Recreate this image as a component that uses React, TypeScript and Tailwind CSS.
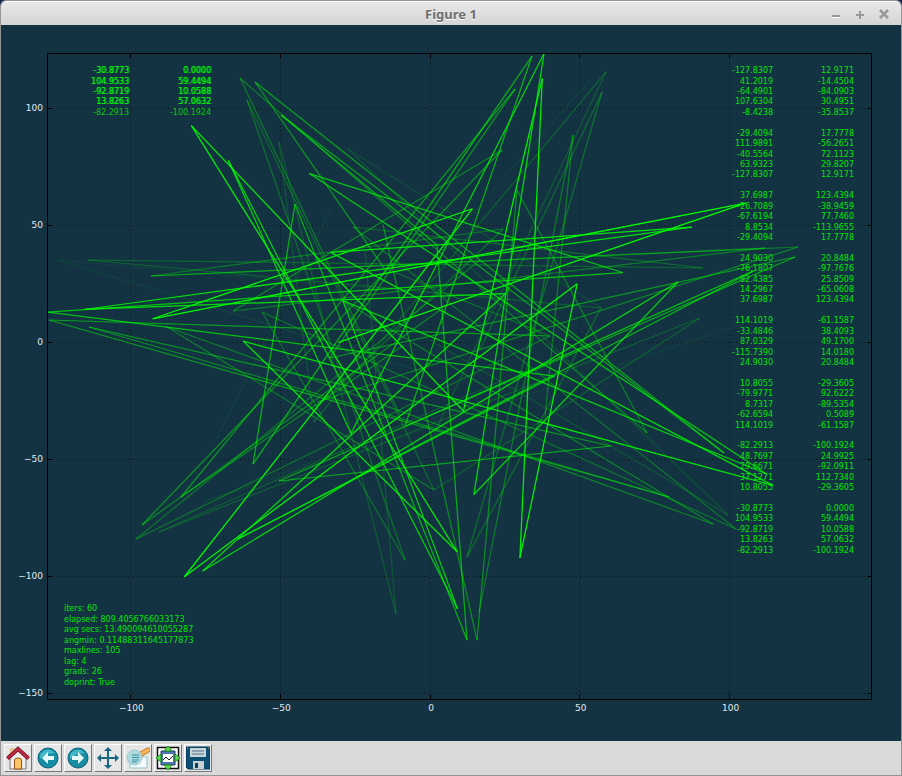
import type { ReactNode } from "react";

type Point = [number, number];
type Segment = [number, number, number, number, number];

const groups: Point[][] = [
  [[-127.8307, 12.9171], [41.2019, -14.4504], [-64.4901, -84.0903], [107.6304, 30.4951], [-8.4238, -35.8537]],
  [[-29.4094, 17.7778], [111.9891, -56.2651], [-40.5564, 72.1123], [63.9323, 29.8207], [-127.8307, 12.9171]],
  [[37.6987, 123.4394], [-26.7089, -38.9459], [-67.6194, 77.746], [8.8534, -113.9655], [-29.4094, 17.7778]],
  [[24.903, 20.8484], [-76.1807, -97.7676], [82.4385, 25.8509], [14.2967, -65.0608], [37.6987, 123.4394]],
  [[114.1019, -61.1587], [-33.4846, 38.4093], [87.0329, 49.17], [-115.739, 14.018], [24.903, 20.8484]],
  [[10.8055, -29.3605], [-79.9771, 92.6222], [8.7317, -89.5354], [-62.6594, 0.5089], [114.1019, -61.1587]],
  [[-82.2913, -100.1924], [48.7697, 24.9925], [29.6671, -92.0911], [37.1271, 112.734], [10.8055, -29.3605]],
  [[-30.8773, 0], [104.9533, 59.4494], [-92.8719, 10.0588], [13.8263, 57.0632], [-82.2913, -100.1924]],
];

const info = [
  "iters: 60",
  "elapsed: 809.4056766033173",
  "avg secs: 13.490094610055287",
  "angmin: 0.11488311645177873",
  "maxlines: 105",
  "lag: 4",
  "grads: 26",
  "doprint: True",
];

const sx = (x: number) => 431 + x * 2.997;
const sy = (y: number) => 342.3 - y * 2.34;

// Newest point first; the last point of a group is the first of the one before it.
const trail: Point[] = [...groups]
  .reverse()
  .flatMap((g, i) => (i === 0 ? g : g.slice(1)));

// Older segments, in plot coordinates, each with its remaining opacity.
const older: Segment[] = [
  [405, 426, 532, 56, 0.62], [532, 56, 253, 464, 0.62], [253, 464, 295, 204, 0.62],
  [295, 204, 467, 640, 0.6], [467, 640, 437, 245, 0.6], [437, 245, 281, 115, 0.58],
  [281, 115, 724, 453, 0.56], [724, 453, 255, 82, 0.54], [255, 82, 384, 268, 0.5],
  [384, 268, 550, 336, 0.3], [550, 336, 49, 320, 0.52], [49, 320, 669, 497, 0.5],
  [669, 497, 89, 327, 0.42], [89, 327, 611, 446, 0.5], [611, 446, 279, 481, 0.58],
  [279, 481, 795, 257, 0.56], [795, 257, 330, 358, 0.5], [330, 358, 515, 89, 0.5],
  [515, 89, 181, 497, 0.5], [181, 497, 404, 345, 0.4], [233, 311, 502, 150, 0.42],
  [502, 150, 142, 525, 0.46], [142, 525, 440, 310, 0.42], [233, 311, 765, 248, 0.36],
  [765, 248, 151, 276, 0.34], [317, 402, 798, 247, 0.42], [798, 247, 151, 276, 0.36],
  [151, 276, 503, 229, 0.34], [503, 229, 314, 410, 0.3], [167, 327, 713, 524, 0.38],
  [167, 327, 434, 490, 0.36], [713, 524, 342, 300, 0.38], [240, 78, 647, 433, 0.38],
  [647, 433, 517, 190, 0.38], [517, 190, 477, 640, 0.44], [477, 640, 383, 225, 0.44],
  [240, 78, 400, 415, 0.34], [479, 612, 573, 135, 0.36], [573, 135, 545, 417, 0.36],
  [136, 539, 480, 260, 0.32], [136, 539, 550, 336, 0.34], [736, 529, 353, 227, 0.32],
  [736, 529, 262, 312, 0.32], [262, 312, 405, 560, 0.3], [405, 560, 247, 100, 0.3],
  [247, 100, 434, 490, 0.28], [353, 227, 703, 268, 0.28], [703, 268, 88, 260, 0.26],
  [88, 260, 601, 308, 0.24], [601, 308, 467, 557, 0.28], [467, 557, 602, 92, 0.3],
  [602, 92, 480, 350, 0.28], [606, 72, 314, 422, 0.22], [606, 72, 434, 434, 0.2],
  [396, 614, 279, 142, 0.2], [396, 614, 365, 250, 0.18], [279, 142, 314, 422, 0.16],
  [348, 149, 601, 308, 0.12], [348, 149, 728, 515, 0.15], [728, 515, 430, 340, 0.16],
  [159, 532, 700, 318, 0.22], [159, 532, 503, 380, 0.2], [700, 318, 434, 490, 0.22],
  [740, 325, 203, 502, 0.08], [203, 502, 590, 360, 0.07], [216, 440, 330, 210, 0.07],
  [590, 80, 353, 350, 0.07], [58, 260, 450, 380, 0.09], [58, 260, 500, 300, 0.07],
];

const xTicks = [-100, -50, 0, 50, 100];
const yTicks = [100, 50, 0, -50, -100, -150];
const tickLabel = (n: number) => (n < 0 ? `−${-n}` : `${n}`);

function Plot() {
  return (
    <svg
      viewBox="1 25 900 716"
      className="block h-auto w-full"
      role="img"
      aria-label="Line plot of the search trail"
    >
      <g stroke="#000" strokeOpacity="0.6" strokeDasharray="1 3">
        {xTicks.map((t) => {
          const x = Math.floor(sx(t)) - 0.5;
          return <line key={t} x1={x} x2={x} y1="699" y2="54" />;
        })}
        {yTicks.map((t) => {
          const y = Math.floor(sy(t)) + 0.5;
          return <line key={t} x1="48" x2="871" y1={y} y2={y} />;
        })}
      </g>
      <g fill="none" stroke="#00ff00" strokeWidth="1.25">
        {[...older].reverse().map(([x1, y1, x2, y2, o], i) => (
          <line key={i} x1={x1} y1={y1} x2={x2} y2={y2} strokeOpacity={o} />
        ))}
        {trail.slice(1).map((p, i) => (
          <line
            key={i}
            x1={sx(trail[i][0])}
            y1={sy(trail[i][1])}
            x2={Math.max(48, sx(p[0]))}
            y2={Math.max(54, sy(p[1]))}
            strokeOpacity={1 - i * 0.011}
          />
        ))}
      </g>
      <g stroke="#000">
        {xTicks.map((t) => {
          const x = Math.floor(sx(t)) - 0.5;
          return <path key={t} d={`M${x} 699v-4M${x} 54v4`} />;
        })}
        {yTicks.map((t) => {
          const y = Math.floor(sy(t)) + 0.5;
          return <path key={t} d={`M48 ${y}h4M871 ${y}h-4`} />;
        })}
        <rect x="47.5" y="53.5" width="824" height="646" fill="none" />
      </g>
      <g className="fill-[#e4e9eb] text-[9px]">
        {xTicks.map((t) => (
          <text key={t} x={sx(t)} y="711" textAnchor="middle">
            {tickLabel(t)}
          </text>
        ))}
        {yTicks.map((t) => (
          <text key={t} x="43" y={Math.round(sy(t)) + 3} textAnchor="end">
            {tickLabel(t)}
          </text>
        ))}
      </g>
    </svg>
  );
}

function Row({ point }: { point: Point }) {
  return (
    <tr>
      <td className="w-10 p-0 align-middle">{point[0].toFixed(4)}</td>
      <td className="p-0 align-middle">{point[1].toFixed(4)}</td>
    </tr>
  );
}

function History() {
  return (
    <table
      aria-label="Point history"
      className="absolute top-[41px] right-[47px] h-[490px] w-[122px] border-collapse text-right text-[8px] leading-[8px] text-[#02e406]"
    >
      <tbody>
        {groups.flatMap((g, i) => [
          ...g.map((p, j) => <Row key={`${i}-${j}`} point={p} />),
          ...(i < groups.length - 1
            ? [
                <tr key={`gap-${i}`}>
                  <td className="p-0" colSpan={2}>
                    &nbsp;
                  </td>
                </tr>,
              ]
            : []),
        ])}
      </tbody>
    </table>
  );
}

function Latest() {
  return (
    <table
      aria-label="Latest points"
      className="absolute top-[41px] left-[88px] h-[52px] w-[122px] border-collapse text-right text-[8px] leading-[8px] text-[#00f804] [&_tr:last-child]:text-[#02c80a] [&_tr:not(:last-child)]:[text-shadow:1px_0_#00f80499]"
    >
      <tbody>
        {groups[7].map((p, i) => (
          <Row key={i} point={p} />
        ))}
      </tbody>
    </table>
  );
}

function Tool({ label, children }: { label: string; children: ReactNode }) {
  return (
    <button
      type="button"
      aria-label={label}
      className="flex size-7 items-center justify-center border border-t-white border-r-[#777] border-b-[#777] border-l-white bg-[#e6e6e6]"
    >
      <svg viewBox="0 0 24 24" className="size-6 shrink-0" fill="none">
        {children}
      </svg>
    </button>
  );
}

function Toolbar() {
  return (
    <div role="toolbar" aria-label="Figure tools" className="flex gap-0.5 bg-[#d9d9d9] p-[3px]">
      <Tool label="Home">
        <path d="M5 3h3v8H5z" fill="#fff3d0" stroke="#d69a2d" />
        <path d="M4 12l8-8 8 8v11H4z" fill="#eee" stroke="#777" />
        <path d="M1.500 12.500L12 3l10.500 9.500" stroke="#701023" strokeWidth="4" />
        <path d="M1.500 12.500L12 3l10.500 9.500" stroke="#b92942" strokeWidth="2.500" />
        <path d="M8.500 23V14q0-2 3.500-2t3.500 2v9z" fill="#ffc568" stroke="#96520d" />
      </Tool>
      <Tool label="Back">
        <circle cx="12" cy="12" r="10" fill="#168da3" stroke="#086078" />
        <path d="M4 9a9 9 0 0 1 15-2Q10 7 4 13z" fill="#46b9c8" />
        <path d="M6 12l6-6v4h6v4h-6v4z" fill="#e8f7f8" />
      </Tool>
      <Tool label="Forward">
        <circle cx="12" cy="12" r="10" fill="#168da3" stroke="#086078" />
        <path d="M4 9a9 9 0 0 1 15-2Q10 7 4 13z" fill="#46b9c8" />
        <path d="M18 12l-6-6v4H6v4h6v4z" fill="#e8f7f8" />
      </Tool>
      <Tool label="Pan">
        <path d="M12 3v18M3 12h18" stroke="#176783" strokeWidth="2" />
        <path d="M12 1l4 4H8zM12 23l-4-4h8zM1 12l4-4v8zM23 12l-4 4V8z" fill="#176783" />
      </Tool>
      <Tool label="Zoom">
        <path d="M4 11h17v11H4z" fill="#f4fafa" stroke="#91c6ce" />
        <path d="M15 8l7-4" stroke="#bc7420" strokeWidth="5" strokeLinecap="round" />
        <path d="M15 8l7-4" stroke="#f8b45b" strokeWidth="3.500" strokeLinecap="round" />
        <circle cx="8.500" cy="11.500" r="7.500" fill="#a9d8dd" fillOpacity="0.9" stroke="#9cc9d0" />
        <path d="M6 9h7M6 11.500h7M6 14h7M6 16h5" stroke="#378da0" />
      </Tool>
      <Tool label="Configure subplots">
        <path d="M1.500 1.500h21v21h-21z" fill="#fff" stroke="#111" strokeWidth="1.500" />
        <path d="M5 5h14v14H5z" fill="#4f75b2" stroke="#25406f" />
        <path d="M7 8h10v8H7z" fill="#fff" />
        <path d="M7 14l3-3 3 3 4-4" stroke="#222" />
        <path d="M12 0l4 5H8zM12 24l-4-5h8zM0 12l5-4v8zM24 12l-5 4V8z" fill="#5be04b" stroke="#258a20" />
      </Tool>
      <Tool label="Save">
        <path d="M0 1h24v22H2l-2-2z" fill="#0d4f72" stroke="#063855" />
        <path d="M4 2h16v9H4z" fill="#c5d5da" />
        <path d="M6 5h12M6 8h12" stroke="#557783" />
        <path d="M1 2h1M22 2h1" stroke="#ed9b56" />
        <path d="M7 15h11v8H7z" fill="#c8d0d3" />
        <path d="M9 17h3v5H9z" fill="#123f59" />
      </Tool>
    </div>
  );
}

export default function App() {
  return (
    <div className="flex min-h-screen flex-col bg-[#1b2455] font-['DejaVu_Sans',sans-serif]">
      <main className="flex flex-1 flex-col overflow-hidden rounded-t-md border border-b-2 border-[#959595] bg-[#133343]">
        <header className="grid h-6 grid-cols-[1fr_auto_1fr] items-center border-t border-white bg-linear-to-b from-[#e8e8e8] to-[#d4d4d4] font-['Noto_Sans',sans-serif] text-[#6e6e6e]">
          <h1 className="col-start-2 text-[13px] leading-5 font-bold [text-shadow:0_1px_#fff]">Figure 1</h1>
          <div className="flex justify-end gap-3 pr-[11px]">
            <button type="button" aria-label="Minimize" className="size-3">
              <svg viewBox="0 0 12 12" className="size-3" stroke="#989898" strokeWidth="2">
                <path d="M2 9.500h8" stroke="#fff" strokeWidth="1" />
                <path d="M2 8h8" />
              </svg>
            </button>
            <button type="button" aria-label="Maximize" className="size-3">
              <svg viewBox="0 0 12 12" className="size-3" stroke="#989898" strokeWidth="2">
                <path d="M2 7h8M6 3v8" />
              </svg>
            </button>
            <button type="button" aria-label="Close" className="size-3">
              <svg viewBox="0 0 12 12" className="size-3" stroke="#989898" strokeWidth="2.500">
                <path d="M2 2l8 8M10 2l-8 8" />
              </svg>
            </button>
          </div>
        </header>
        <section className="relative flex-1" aria-label="Figure">
          <Plot />
          <Latest />
          <History />
          <ul className="absolute bottom-[53px] left-[63px] flex h-[84px] flex-col justify-between text-[8px] leading-[10px] text-[#02e406]">
            {info.map((line) => (
              <li key={line}>{line}</li>
            ))}
          </ul>
        </section>
        <Toolbar />
      </main>
    </div>
  );
}
